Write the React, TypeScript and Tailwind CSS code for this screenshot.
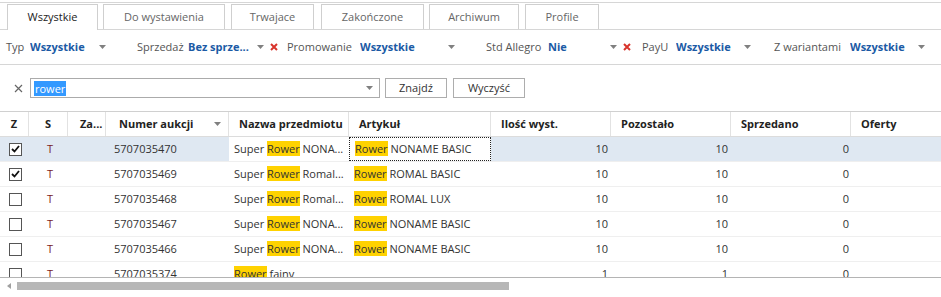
import React from 'react';

const font = { fontFamily: '"Open Sans", "Noto Sans", sans-serif' };

const tabs = [
  { label: 'Wszystkie', cls: 'ml-[7px] w-[91px]', active: true },
  { label: 'Do wystawienia', cls: 'ml-[5px] w-[122px]' },
  { label: 'Trwajace', cls: 'ml-[6px] w-[83px]' },
  { label: 'Zakończone', cls: 'ml-[7px] w-[103px]' },
  { label: 'Archiwum', cls: 'ml-[5px] w-[90px]' },
  { label: 'Profile', cls: 'ml-[6px] w-[74px]' },
];

const filters = [
  { label: 'Typ', value: 'Wszystkie', box: 'w-[137px] pl-[6px]', lw: 'w-[24px]', vw: 'w-[69px]', clear: false },
  { label: 'Sprzedaż', value: 'Bez sprze...', box: 'w-[150px]', lw: 'w-[51px]', vw: 'w-[69px]', clear: true },
  { label: 'Promowanie', value: 'Wszystkie', box: 'w-[199px]', lw: 'w-[73px]', vw: 'w-[88px]', clear: false },
  { label: 'Std Allegro', value: 'Nie', box: 'w-[156px]', lw: 'w-[62px]', vw: 'w-[62px]', clear: true },
  { label: 'PayU', value: 'Wszystkie', box: 'w-[132px]', lw: 'w-[34px]', vw: 'w-[68px]', clear: false },
  { label: 'Z wariantami', value: 'Wszystkie', box: 'flex-1', lw: 'w-[76px]', vw: 'w-[68px]', clear: false },
];

const rows = [
  { checked: true, num: '5707035470', name: 'NONA...', art: 'NONAME BASIC', il: '10', poz: '10', sp: '0', selected: true },
  { checked: true, num: '5707035469', name: 'Romal...', art: 'ROMAL BASIC', il: '10', poz: '10', sp: '0' },
  { checked: false, num: '5707035468', name: 'Romal...', art: 'ROMAL LUX', il: '10', poz: '10', sp: '0' },
  { checked: false, num: '5707035467', name: 'NONA...', art: 'NONAME BASIC', il: '10', poz: '10', sp: '0' },
  { checked: false, num: '5707035466', name: 'NONA...', art: 'NONAME BASIC', il: '10', poz: '10', sp: '0' },
  { checked: false, num: '5707035374', name: null, art: null, il: '1', poz: '1', sp: '0' },
];

const cols = 'grid grid-cols-[29px_39px_38px_123px_120px_142px_120px_120px_120px_1fr]';

function Caret({ className = '' }: { className?: string }) {
  return (
    <svg width="7" height="4" viewBox="0 0 7 4" className={className}>
      <path d="M0 0h7L3.5 4z" fill="#808080" />
    </svg>
  );
}

function RedX() {
  return (
    <svg width="8" height="8" viewBox="0 0 8 8" className="ml-[6px]">
      <path d="M1 1l6 6M7 1L1 7" stroke="#d8342c" strokeWidth="2" />
    </svg>
  );
}

function Hl({ children }: { children: React.ReactNode }) {
  return <span className="bg-[#ffd200]">{children}</span>;
}

function Checkbox({ checked }: { checked: boolean }) {
  return (
    <div className="w-[13px] h-[13px] border border-[#555] bg-white flex items-center justify-center">
      {checked && (
        <svg width="9" height="8" viewBox="0 0 9 8">
          <path d="M1 4l2.5 2.5L8 1" stroke="#111" strokeWidth="1.8" fill="none" />
        </svg>
      )}
    </div>
  );
}

export default function App() {
  return (
    <div className="w-[941px] h-[297px] bg-white overflow-hidden text-[11px] text-[#333]" style={font}>
      {/* Tabs */}
      <div className="mt-[2px] border-t border-[#d6d6d6] pt-[2px] flex items-end border-b h-[28px]">
        {tabs.map((t) => (
          <div
            key={t.label}
            className={`${t.cls} border border-b-0 border-[#cfcfcf] flex items-center justify-center ${
              t.active ? 'h-[26px] -mb-px bg-white text-[#222]' : 'h-[25px] text-[#666]'
            }`}
          >
            {t.label}
          </div>
        ))}
      </div>

      {/* Filters */}
      <div className="flex items-center h-[35px] border-b border-[#d6d6d6]">
        {filters.map((f) => (
          <div key={f.label} className={`${f.box} flex items-center`}>
            <span className={`${f.lw} text-[#555] whitespace-nowrap`}>{f.label}</span>
            <span className={`${f.vw} font-bold text-[#1b5aa5] whitespace-nowrap overflow-hidden`}>{f.value}</span>
            <Caret />
            {f.clear && <RedX />}
          </div>
        ))}
      </div>

      {/* Search */}
      <div className="flex items-center mt-[13px] h-[20px]">
        <svg width="9" height="9" viewBox="0 0 9 9" className="ml-[14px] mr-[7px]">
          <path d="M1 1l7 7M8 1L1 8" stroke="#666" strokeWidth="1.2" />
        </svg>
        <div className="w-[350px] h-[20px] border border-[#ababab] flex items-center pl-[3px] pr-[6px]">
          <span className="bg-[#3399ff] text-white leading-[15px] px-px">rower</span>
          <div className="flex-1" />
          <Caret />
        </div>
        <button className="ml-[5px] w-[62px] h-[20px] border border-[#adadad] bg-white text-[#333]">Znajdź</button>
        <button className="ml-[6px] w-[72px] h-[20px] border border-[#adadad] bg-white text-[#333]">Wyczyść</button>
      </div>

      {/* Table */}
      <div className="mt-[13px] border-t border-[#d0d0d0]">
        <div className={`${cols} h-[25px] border-b border-[#dcdcdc] font-bold text-[#222]`}>
          <div className="flex items-center justify-center border-r border-[#e2e2e2]">Z</div>
          <div className="flex items-center justify-center border-r border-[#e2e2e2]">S</div>
          <div className="flex items-center pl-[12px] border-r border-[#e2e2e2]">Za...</div>
          <div className="flex items-center pl-[13px] pr-[7px] border-r border-[#e2e2e2]">
            <span className="flex-1">Numer aukcji</span>
            <Caret />
          </div>
          <div className="flex items-center pl-[10px] border-r border-[#e2e2e2] whitespace-nowrap overflow-hidden">Nazwa przedmiotu</div>
          <div className="flex items-center pl-[10px] border-r border-[#e2e2e2]">Artykuł</div>
          <div className="flex items-center pl-[10px] border-r border-[#e2e2e2]">Ilość wyst.</div>
          <div className="flex items-center pl-[10px] border-r border-[#e2e2e2]">Pozostało</div>
          <div className="flex items-center pl-[10px] border-r border-[#e2e2e2]">Sprzedano</div>
          <div className="flex items-center pl-[10px]">Oferty</div>
        </div>

        <div className="h-[141px] overflow-hidden border-b border-[#b4b4b4]">
          {rows.map((r) => {
            const bg = r.selected ? 'bg-[#dfe8f2]' : '';
            return (
              <div key={r.num} className={`${cols} h-[25px] border-b border-[#efefef] whitespace-nowrap`}>
                <div className={`${bg} flex items-center pl-[9px]`}>
                  <Checkbox checked={r.checked} />
                </div>
                <div className={`${bg} flex items-center pl-[18px] text-[#7a2226]`}>T</div>
                <div className={bg} />
                <div className={`${bg} flex items-center pl-[8px]`}>{r.num}</div>
                <div className="flex items-center pl-[5px] overflow-hidden">
                  {r.name ? (
                    <span>
                      Super <Hl>Rower</Hl> {r.name}
                    </span>
                  ) : (
                    <span>
                      <Hl>Rower</Hl> fainy
                    </span>
                  )}
                </div>
                <div
                  className={`flex items-center pl-[5px] ${
                    r.selected ? 'border border-dotted border-[#222]' : ''
                  }`}
                >
                  {r.art && (
                    <span>
                      <Hl>Rower</Hl> {r.art}
                    </span>
                  )}
                </div>
                <div className={`${bg} flex items-center justify-end pr-[3px]`}>{r.il}</div>
                <div className={`${bg} flex items-center justify-end pr-[3px]`}>{r.poz}</div>
                <div className={`${bg} flex items-center justify-end pr-[2px]`}>{r.sp}</div>
                <div className={bg} />
              </div>
            );
          })}
        </div>

        {/* Horizontal scrollbar */}
        <div className="h-[15px] flex items-center">
          <svg width="4" height="6" viewBox="0 0 4 6" className="ml-[7px] mr-[6px]">
            <path d="M4 0v6L0 3z" fill="#a0a0a0" />
          </svg>
          <div className="w-[492px] h-[8px] bg-[#b7b7b7]" />
        </div>
      </div>
    </div>
  );
}
